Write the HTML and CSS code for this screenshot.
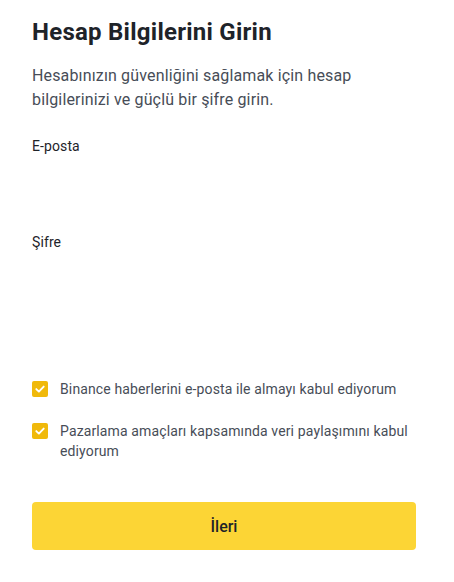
FILE: index.html
```html
<!DOCTYPE html>
<html lang="tr">
<head>
<meta charset="utf-8">
<link rel="stylesheet" href="styles.css">
</head>
<body>
<main class="form">
  <h1 class="title">Hesap Bilgilerini Girin</h1>
  <p class="subtitle">Hesabınızın güvenliğini sağlamak için hesap bilgilerinizi ve güçlü bir şifre girin.</p>
  <div class="field">
    <label class="label">E-posta</label>
    <div class="input"></div>
  </div>
  <div class="field">
    <label class="label">Şifre</label>
    <div class="input input-tall"></div>
  </div>
  <div class="checks">
    <div class="check">
      <span class="box"><svg width="16" height="16" viewBox="0 0 16 16"><path d="M4.3 8.1 L6.9 10.6 L11.7 5.6" fill="none" stroke="#fff" stroke-width="1.9" stroke-linecap="round" stroke-linejoin="round"/></svg></span>
      <span class="check-text">Binance haberlerini e-posta ile almayı kabul ediyorum</span>
    </div>
    <div class="check">
      <span class="box"><svg width="16" height="16" viewBox="0 0 16 16"><path d="M4.3 8.1 L6.9 10.6 L11.7 5.6" fill="none" stroke="#fff" stroke-width="1.9" stroke-linecap="round" stroke-linejoin="round"/></svg></span>
      <span class="check-text">Pazarlama amaçları kapsamında veri paylaşımını kabul ediyorum</span>
    </div>
  </div>
  <button class="btn">İleri</button>
</main>
</body>
</html>
```
FILE: styles.css
```css
* { box-sizing: border-box; }
body {
  margin: 0;
  background: #fff;
  font-family: Roboto, "Liberation Sans", sans-serif;
  color: #1e2329;
}
.form {
  width: 384px;
  margin-left: 32px;
  padding-top: 16px;
  display: flex;
  flex-direction: column;
}
.title {
  margin: 0;
  font-size: 24px;
  line-height: 32px;
  font-weight: 700;
  letter-spacing: 0.25px;
  color: #1e2329;
}
.subtitle {
  margin: 16px 0 0;
  font-size: 16px;
  line-height: 24px;
  letter-spacing: 0.15px;
  color: #474d57;
}
.field {
  display: flex;
  flex-direction: column;
}
.field:first-of-type { margin-top: 24px; }
.label {
  font-size: 14px;
  line-height: 20px;
  letter-spacing: 0.1px;
  color: #1e2329;
}
.input { height: 76px; }
.input-tall { height: 127px; }
.checks {
  display: flex;
  flex-direction: column;
  gap: 22px;
}
.check {
  display: flex;
  gap: 12px;
  align-items: flex-start;
}
.box {
  flex: none;
  width: 16px;
  height: 16px;
  margin-top: 2px;
  border-radius: 2px;
  background: #f0b90b;
  display: flex;
}
.check-text {
  font-size: 14px;
  line-height: 20px;
  letter-spacing: 0.13px;
  color: #474d57;
}
.btn {
  margin-top: 41px;
  height: 48px;
  border: 0;
  border-radius: 4px;
  background: #fcd535;
  font-family: inherit;
  font-size: 16px;
  font-weight: 500;
  color: #1e2329;
}
```
